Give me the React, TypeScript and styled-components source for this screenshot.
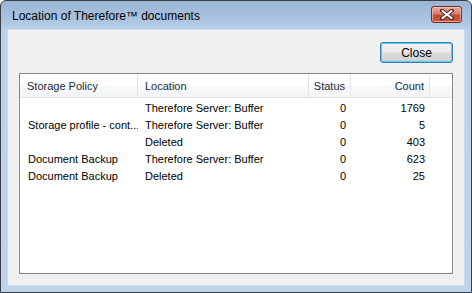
import React from "react";
import styled, { createGlobalStyle } from "styled-components";

const Global = createGlobalStyle`
  html, body { margin: 0; padding: 0; background: #ffffff; }
  #root { width: 472px; height: 293px; }
`;

const Window = styled.div`
  box-sizing: border-box;
  width: 472px;
  height: 293px;
  border: 1px solid #3b3f45;
  border-radius: 6px 6px 0 0;
  background: linear-gradient(180deg, #9ab5d5 0px, #a9c3e0 18px, #b9d1ea 29px, #bdd4eb 100%);
  display: flex;
  flex-direction: column;
  overflow: hidden;
`;

const TitleBar = styled.div`
  height: 29px;
  flex: none;
  display: flex;
  align-items: center;
  justify-content: space-between;
  padding: 0 9px 0 11px;
`;

const Title = styled.span`
  font-family: "Liberation Sans", Arial, sans-serif;
  font-size: 12px;
  color: #000;
  margin-top: 1px;
`;

const CloseX = styled.button`
  box-sizing: border-box;
  width: 31px;
  height: 17px;
  margin-top: -2px;
  padding: 0;
  border: 1px solid #6f2e25;
  border-radius: 3px;
  background: linear-gradient(180deg, #e9a99a 0%, #d88070 45%, #c24a33 55%, #c9553c 100%);
  box-shadow: inset 0 0 0 1px rgba(255, 210, 200, 0.6);
  display: flex;
  align-items: center;
  justify-content: center;
`;

const Client = styled.div`
  flex: 1;
  margin: 0 7px 7px 7px;
  background: #f0f0f0;
  box-shadow: 0 0 0 1px #c9dcef;
  display: flex;
  flex-direction: column;
  padding: 12px 11px 11px 11px;
  gap: 10px;
`;

const ButtonRow = styled.div`
  display: flex;
  justify-content: flex-end;
`;

const PushButton = styled.button`
  box-sizing: border-box;
  width: 73px;
  height: 21px;
  border: 1px solid #3c7fb1;
  border-radius: 3px;
  background: linear-gradient(180deg, #f2f2f2 0%, #ebebeb 48%, #dddddd 52%, #cfcfcf 100%);
  box-shadow: inset 0 0 0 1px #48d0f8;
  font-family: "Liberation Sans", Arial, sans-serif;
  font-size: 12px;
  color: #000;
  padding: 0;
`;

const List = styled.div`
  flex: 1;
  border: 1px solid #828790;
  background: #fff;
  display: flex;
  flex-direction: column;
`;

const cols = "118px 171px 42px 79px 1fr";

const Header = styled.div`
  display: grid;
  grid-template-columns: ${cols};
  height: 23px;
  background: linear-gradient(180deg, #ffffff 0%, #ffffff 50%, #f7f8f9 51%, #f3f4f6 100%);
  border-bottom: 1px solid #e5e5e5;
`;

const HeadCell = styled.div<{ $right?: boolean; $last?: boolean }>`
  display: flex;
  align-items: center;
  justify-content: ${(p) => (p.$right ? "flex-end" : "flex-start")};
  padding: ${(p) => (p.$right ? "0 5px 0 0" : "0 0 0 7px")};
  border-right: ${(p) => (p.$last ? "none" : "1px solid #e5e5e5")};
  font-family: "Liberation Sans", Arial, sans-serif;
  font-size: 11px;
  color: #1e2a3a;
  white-space: nowrap;
`;

const Body = styled.div`
  padding-top: 1px;
  display: flex;
  flex-direction: column;
`;

const Row = styled.div`
  display: grid;
  grid-template-columns: ${cols};
  height: 17px;
`;

const Cell = styled.div<{ $right?: boolean; $indent?: number }>`
  display: flex;
  align-items: center;
  justify-content: ${(p) => (p.$right ? "flex-end" : "flex-start")};
  padding: ${(p) => (p.$right ? "0 5px 0 0" : `0 0 0 ${p.$indent ?? 8}px`)};
  font-family: "Liberation Sans", Arial, sans-serif;
  font-size: 11px;
  color: #000;
  white-space: nowrap;
  overflow: hidden;
`;

const rows = [
  ["", "Therefore Server: Buffer", "0", "1769"],
  ["Storage profile - cont...", "Therefore Server: Buffer", "0", "5"],
  ["", "Deleted", "0", "403"],
  ["Document Backup", "Therefore Server: Buffer", "0", "623"],
  ["Document Backup", "Deleted", "0", "25"],
];

export default function App() {
  return (
    <>
      <Global />
      <Window>
        <TitleBar>
          <Title>Location of Therefore™ documents</Title>
          <CloseX aria-label="Close window">
            <svg width="14" height="11" viewBox="0 0 14 11">
              <path
                d="M2 1.5 L12 9.5 M12 1.5 L2 9.5"
                stroke="#4a2a26"
                strokeWidth="4"
                strokeLinecap="round"
                fill="none"
              />
              <path
                d="M2.5 2 L11.5 9 M11.5 2 L2.5 9"
                stroke="#ffffff"
                strokeWidth="2.2"
                strokeLinecap="round"
                fill="none"
              />
            </svg>
          </CloseX>
        </TitleBar>
        <Client>
          <ButtonRow>
            <PushButton>Close</PushButton>
          </ButtonRow>
          <List>
            <Header>
              <HeadCell>Storage Policy</HeadCell>
              <HeadCell>Location</HeadCell>
              <HeadCell $right>Status</HeadCell>
              <HeadCell $right>Count</HeadCell>
              <HeadCell $last />
            </Header>
            <Body>
              {rows.map((r, i) => (
                <Row key={i}>
                  <Cell>{r[0]}</Cell>
                  <Cell $indent={7}>{r[1]}</Cell>
                  <Cell $right>{r[2]}</Cell>
                  <Cell $right>{r[3]}</Cell>
                  <Cell />
                </Row>
              ))}
            </Body>
          </List>
        </Client>
      </Window>
    </>
  );
}
